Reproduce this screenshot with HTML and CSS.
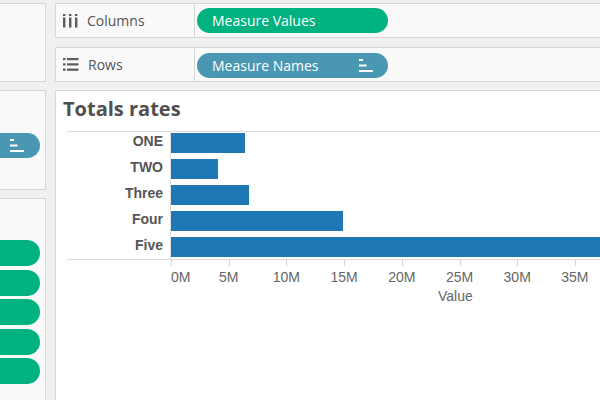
FILE: index.html
```html
<!DOCTYPE html>
<html lang="en">
<head>
<meta charset="utf-8">
<title>Totals rates</title>
<link rel="stylesheet" href="styles.css">
</head>
<body>
<div class="app">
  <aside class="side">
    <div class="card card-top"></div>
    <div class="card card-marks">
      <div class="pill pill-blue side-pill">
        <svg class="sort-icon" width="14" height="13" viewBox="0 0 14 13"><rect x="0" y="0" width="4" height="2" fill="#fff"/><rect x="0" y="5.5" width="7.5" height="2" fill="#fff"/><rect x="0" y="11" width="14" height="2" fill="#fff"/></svg>
      </div>
    </div>
    <div class="card card-list">
      <div class="pill pill-green side-pill"></div>
      <div class="pill pill-green side-pill"></div>
      <div class="pill pill-green side-pill"></div>
      <div class="pill pill-green side-pill"></div>
      <div class="pill pill-green side-pill"></div>
    </div>
  </aside>

  <main class="main">
    <div class="shelf shelf-columns">
      <div class="shelf-label">
        <svg class="shelf-icon" width="15" height="14" viewBox="0 0 15 14"><rect x="0" y="0" width="2.4" height="2" fill="#5a5a5a"/><rect x="0" y="3.5" width="2.4" height="10" fill="#5a5a5a"/><rect x="6" y="0" width="2.4" height="2" fill="#5a5a5a"/><rect x="6" y="3.5" width="2.4" height="10" fill="#5a5a5a"/><rect x="12" y="0" width="2.4" height="2" fill="#5a5a5a"/><rect x="12" y="3.5" width="2.4" height="10" fill="#5a5a5a"/></svg>
        <span>Columns</span>
      </div>
      <div class="shelf-body">
        <div class="pill pill-green shelf-pill"><span>Measure Values</span></div>
      </div>
    </div>

    <div class="shelf shelf-rows">
      <div class="shelf-label">
        <svg class="shelf-icon" width="16" height="13" viewBox="0 0 16 13"><rect x="0" y="0" width="2.5" height="2.2" fill="#5a5a5a"/><rect x="4" y="0" width="11.5" height="2.2" fill="#5a5a5a"/><rect x="0" y="5.3" width="2.5" height="2.2" fill="#5a5a5a"/><rect x="4" y="5.3" width="11.5" height="2.2" fill="#5a5a5a"/><rect x="0" y="10.6" width="2.5" height="2.2" fill="#5a5a5a"/><rect x="4" y="10.6" width="11.5" height="2.2" fill="#5a5a5a"/></svg>
        <span>Rows</span>
      </div>
      <div class="shelf-body">
        <div class="pill pill-blue shelf-pill">
          <span>Measure Names</span>
          <svg class="sort-icon" width="14" height="13" viewBox="0 0 14 13"><rect x="0" y="0" width="4" height="2" fill="#fff"/><rect x="0" y="5.5" width="7.5" height="2" fill="#fff"/><rect x="0" y="11" width="14" height="2" fill="#fff"/></svg>
        </div>
      </div>
    </div>

    <section class="view">
      <h1 class="title">Totals rates</h1>
      <div class="chart">
        <div class="rows">
          <div class="row"><div class="row-label">ONE</div><div class="track"><div class="bar" style="width:74px"></div></div></div>
          <div class="row"><div class="row-label">TWO</div><div class="track"><div class="bar" style="width:47px"></div></div></div>
          <div class="row"><div class="row-label">Three</div><div class="track"><div class="bar" style="width:78px"></div></div></div>
          <div class="row"><div class="row-label">Four</div><div class="track"><div class="bar" style="width:172px"></div></div></div>
          <div class="row"><div class="row-label">Five</div><div class="track"><div class="bar" style="width:100%"></div></div></div>
        </div>
        <div class="axis">
          <div class="tick first" style="left:0px"><span>0M</span></div>
          <div class="tick" style="left:57.7px"><span>5M</span></div>
          <div class="tick" style="left:115.4px"><span>10M</span></div>
          <div class="tick" style="left:173.1px"><span>15M</span></div>
          <div class="tick" style="left:230.8px"><span>20M</span></div>
          <div class="tick" style="left:288.5px"><span>25M</span></div>
          <div class="tick" style="left:346.2px"><span>30M</span></div>
          <div class="tick" style="left:403.9px"><span>35M</span></div>
        </div>
        <div class="axis-title">Value</div>
      </div>
    </section>
  </main>
</div>
</body>
</html>
```

FILE: styles.css
```css
* { box-sizing: border-box; }

html, body {
  margin: 0;
  padding: 0;
  width: 600px;
  height: 400px;
  overflow: hidden;
  background: #f0f0f0;
  font-family: "Open Sans", "Noto Sans", sans-serif;
}

.app {
  display: flex;
  padding-top: 3px;
  height: 400px;
  overflow: hidden;
}

/* ---------- left side cards ---------- */
.side {
  width: 46px;
  flex: none;
  display: flex;
  flex-direction: column;
  overflow: hidden;
}

.card {
  width: 46px;
  background: #f9f9f9;
  border: 1px solid #d6d6d6;
  border-left: none;
  overflow: hidden;
}

.card-top { height: 79px; flex: none; }

.card-marks {
  height: 100px;
  flex: none;
  margin-top: 8px;
  padding-top: 42px;
}

.card-list {
  flex: 1;
  margin-top: 8px;
  padding-top: 41px;
  border-bottom: none;
  display: flex;
  flex-direction: column;
  gap: 3.5px;
}

.pill {
  display: flex;
  align-items: center;
  height: 25px;
  border-radius: 13px;
  color: #fff;
  font-size: 14px;
}

.pill-green { background: #00b27f; }
.pill-blue { background: #4a97b3; }

.side-pill {
  width: 40px;
  flex: none;
  justify-content: flex-end;
  padding-right: 16px;
  border-radius: 0 13px 13px 0;
}

.card-list .side-pill { height: 26px; }

/* ---------- shelves ---------- */
.main {
  margin-left: 9px;
  width: 545px;
  flex: none;
  display: flex;
  flex-direction: column;
  overflow: hidden;
}

.shelf {
  display: flex;
  height: 35px;
  flex: none;
  background: #f9f9f9;
  border: 1px solid #d6d6d6;
  border-right: none;
}

.shelf-rows { margin-top: 9px; }

.shelf-label {
  width: 139px;
  flex: none;
  display: flex;
  align-items: center;
  gap: 9px;
  padding-left: 7px;
  border-right: 1px solid #d6d6d6;
  color: #555;
  font-size: 14px;
}

.shelf-columns .shelf-icon { margin-top: 1px; }

.shelf-body {
  display: flex;
  align-items: center;
  padding-left: 2px;
}

.shelf-pill {
  width: 191px;
  padding: 0 15px;
  justify-content: space-between;
}

.shelf-rows .shelf-pill { margin-top: 1px; }

/* ---------- view ---------- */
.view {
  margin-top: 8px;
  flex: 1;
  background: #fff;
  border: 1px solid #d6d6d6;
  border-right: none;
  border-bottom: none;
  padding: 6px 0 0 7px;
  overflow: hidden;
}

.title {
  margin: 0;
  font-size: 20px;
  line-height: 24px;
  font-weight: 700;
  color: #4f4f4f;
}

.chart {
  margin: 10px 0 0 4px;
  font-family: "Liberation Sans", Arial, sans-serif;
}

.rows {
  display: flex;
  flex-direction: column;
  gap: 6px;
  padding: 1px 0 2px;
  border-top: 1px solid #dcdcdc;
  border-bottom: 1px solid #dcdcdc;
  background: linear-gradient(#dcdcdc, #dcdcdc) 103px 0 / 1px 100% no-repeat;
}

.row {
  display: flex;
  height: 20px;
}

.row-label {
  width: 104px;
  flex: none;
  padding-right: 8px;
  text-align: right;
  font-size: 14px;
  line-height: 16px;
  font-weight: 700;
  color: #555;
}

.track {
  flex: 1;
  display: flex;
  overflow: hidden;
}

.bar {
  height: 20px;
  background: #1f77b4;
  flex: none;
}

.axis {
  position: relative;
  margin-left: 104px;
  height: 28px;
  background: linear-gradient(#dcdcdc, #dcdcdc) -1px 0 / 1px 6px no-repeat;
}

.tick {
  position: absolute;
  top: 0;
  width: 1px;
  height: 6px;
  background: #d4d4d4;
}

.tick span {
  position: absolute;
  top: 9px;
  left: 0;
  transform: translateX(-50%);
  font-size: 14px;
  line-height: 16px;
  color: #666;
  white-space: nowrap;
}

.tick.first span { transform: none; }

.axis-title {
  margin-left: 104px;
  padding-left: 267px;
  font-size: 14px;
  line-height: 16px;
  color: #666;
}
```
